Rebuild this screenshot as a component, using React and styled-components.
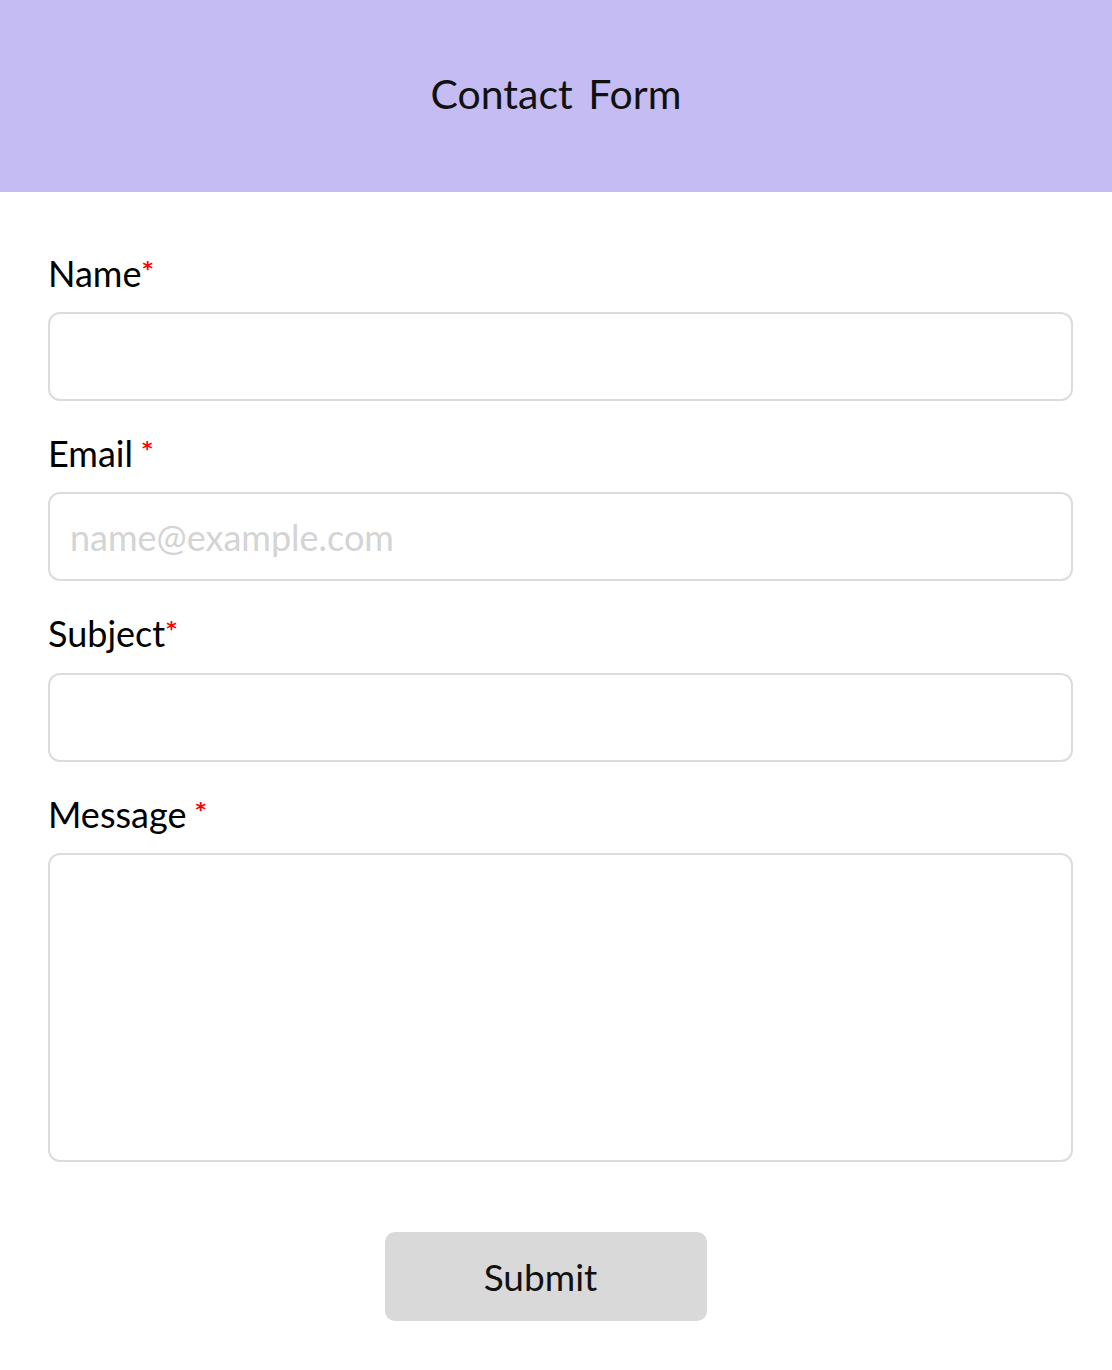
import React from "react"
import styled, { createGlobalStyle } from "styled-components"

const GlobalStyle = createGlobalStyle`
  html, body {
    margin: 0;
    padding: 0;
    background: #fff;
    font-family: Lato, "Noto Sans", sans-serif;
  }
  * {
    box-sizing: border-box;
  }
`

const Header = styled.header`
  height: 192px;
  background: #c4bcf2;
  display: flex;
  align-items: center;
  justify-content: center;
  padding-bottom: 6px;

  h1 {
    margin: 0;
    font-size: 41px;
    font-weight: 400;
    color: #111;
    word-spacing: 5px;
  }
`

const Form = styled.form`
  display: flex;
  flex-direction: column;
  gap: 31px;
  padding: 60px 39px 50px 48px;
`

const Field = styled.div`
  display: flex;
  flex-direction: column;
  gap: 17px;
`

const Label = styled.label`
  font-size: 36px;
  color: #000;
  line-height: 1.2;

  span {
    color: #f00;
    font-family: "DejaVu Sans", sans-serif;
    font-weight: 700;
    font-size: 20px;
    vertical-align: 12px;
    margin-left: ${({ $spaced }) => ($spaced ? "9px" : "1px")};
  }
`

const Input = styled.input`
  width: 100%;
  height: 89px;
  border: 2px solid #dcdcdc;
  border-radius: 12px;
  padding: 0 20px;
  font-family: inherit;
  font-size: 36px;
  outline: none;

  &::placeholder {
    color: #d4d4d4;
  }
`

const TextArea = styled.textarea`
  width: 100%;
  height: 309px;
  border: 2px solid #dcdcdc;
  border-radius: 12px;
  padding: 20px;
  font-family: inherit;
  font-size: 36px;
  resize: none;
  outline: none;
  display: block;
`

const ButtonRow = styled.div`
  display: flex;
  justify-content: center;
  padding-right: 30px;
  margin-top: 39px;
`

const SubmitButton = styled.button`
  width: 322px;
  height: 89px;
  border: none;
  border-radius: 10px;
  background: #d9d9d9;
  padding: 0 10px 0 0;
  font-family: inherit;
  font-size: 37px;
  color: #111;
  cursor: pointer;
`

export default function App() {
  return (
    <>
      <GlobalStyle />
      <Header>
        <h1>Contact Form</h1>
      </Header>
      <Form onSubmit={(e) => e.preventDefault()}>
        <Field>
          <Label>
            Name<span>*</span>
          </Label>
          <Input type="text" />
        </Field>
        <Field>
          <Label $spaced>
            Email<span>*</span>
          </Label>
          <Input type="email" placeholder="name@example.com" />
        </Field>
        <Field>
          <Label>
            Subject<span>*</span>
          </Label>
          <Input type="text" />
        </Field>
        <Field>
          <Label $spaced>
            Message<span>*</span>
          </Label>
          <TextArea />
        </Field>
        <ButtonRow>
          <SubmitButton type="submit">Submit</SubmitButton>
        </ButtonRow>
      </Form>
    </>
  )
}
